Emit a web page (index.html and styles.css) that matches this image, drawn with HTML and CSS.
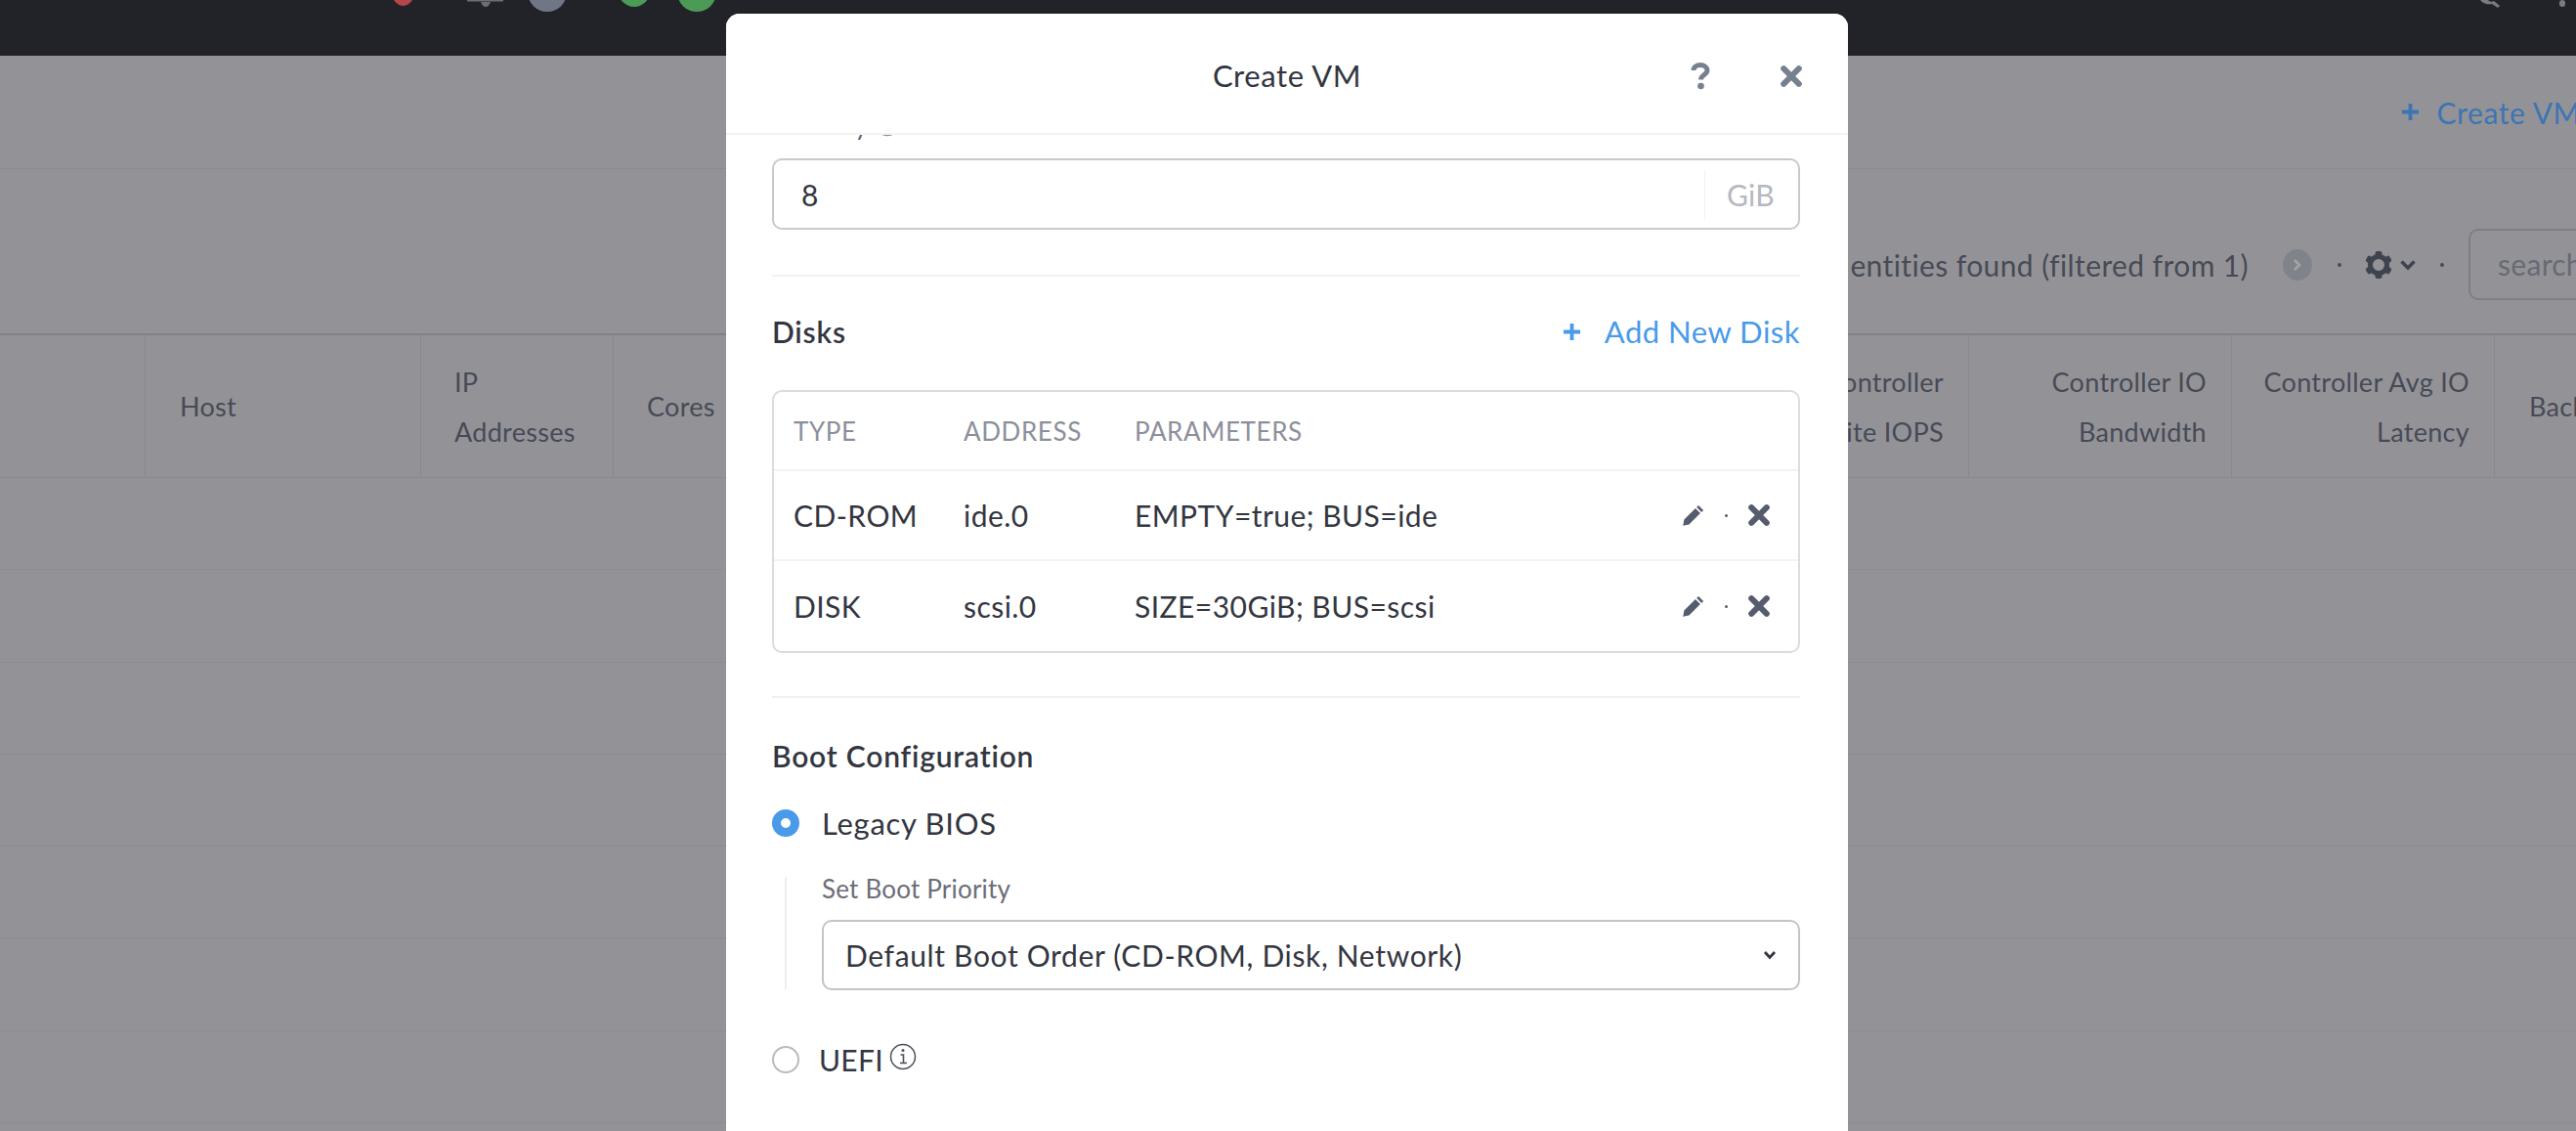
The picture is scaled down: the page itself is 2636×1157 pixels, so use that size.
FILE: index.html
```html
<!DOCTYPE html>
<html lang="en">
  <head>
    <meta charset="UTF-8" />
    <title>Create VM</title>
    <link rel="stylesheet" href="styles.css">
  </head>
  <body>
    <svg class="defs" width="0" height="0">
      <symbol id="icon-x" viewBox="0 0 20 20">
        <path d="M3.5 3.5 L16.5 16.5 M16.5 3.5 L3.5 16.5" fill="none" stroke="currentColor" stroke-width="5" stroke-linecap="round" />
      </symbol>
      <symbol id="icon-pencil" viewBox="0 0 20 20">
        <path d="M14.2 1.6 L18.4 5.8 L16.8 7.4 L12.6 3.2 Z M11.6 4.2 L15.8 8.4 L6.2 18 L1 19 L2 13.8 Z" fill="currentColor" />
      </symbol>
      <symbol id="icon-plus" viewBox="0 0 20 20">
        <path d="M10 1 V19 M1 10 H19" fill="none" stroke="currentColor" stroke-width="4" />
      </symbol>
    </svg>

    <div class="topbar">
      <svg class="topbar-icons" width="340" height="14" viewBox="0 0 340 14">
        <path d="M0 0 H19 C17 3 13 6 9.500 6 C6 6 2 3 0 0 Z" fill="#b5474a" />
        <path d="M75 0 H112 V1.500 H75 Z" fill="#6d6e74" />
        <path d="M89 2 H99 C98 5 96 7 94 7 C92 7 90 5 89 2 Z" fill="#6d6e74" />
        <circle cx="157" cy="-8" r="20" fill="#6f7685" />
        <circle cx="246" cy="-9" r="16" fill="#4b9a56" />
        <circle cx="310" cy="-8" r="20" fill="#4b9a56" />
      </svg>
      <svg class="topbar-tools" width="90" height="8" viewBox="0 0 90 8">
        <path d="M0 0 L8 0 C10 2 12 2 14 1 L20 6 L18 8 L12 4 C8 5 3 4 0 0 Z" fill="#7a7b80" />
        <rect x="81" y="0" width="6" height="7" rx="3" fill="#7a7b80" />
      </svg>
    </div>

    <div class="page">
      <div class="title-row">
        <span class="create-link">
          <svg class="create-plus" width="19" height="19"><use href="#icon-plus" /></svg>
          Create VM
        </span>
      </div>

      <div class="toolbar">
        <span class="found">0 entities found (filtered from 1)</span>
        <span class="next-btn">
          <svg width="10" height="14" viewBox="0 0 10 14"><path d="M2 2 L7 7 L2 12" fill="none" stroke="#a3a5a9" stroke-width="2.500" /></svg>
        </span>
        <span class="dot dot-one"></span>
        <svg class="gear" width="28" height="30" viewBox="0 0 28 30">
          <g fill="#3f4350">
            <rect x="10.500" y="1" width="7" height="28" rx="2" />
            <rect x="10.500" y="1" width="7" height="28" rx="2" transform="rotate(60 14 15)" />
            <rect x="10.500" y="1" width="7" height="28" rx="2" transform="rotate(120 14 15)" />
          </g>
          <circle cx="14" cy="15" r="8.500" fill="#939397" stroke="#3f4350" stroke-width="5" />
        </svg>
        <svg class="gear-caret" width="18" height="12" viewBox="0 0 18 12"><path d="M2.500 2.500 L9 9 L15.500 2.500" fill="none" stroke="#3f4350" stroke-width="3.500" /></svg>
        <span class="dot dot-two"></span>
        <div class="search-box">search</div>
      </div>

      <div class="grid-head">
        <div class="cell col-name"></div>
        <div class="cell col-host">Host</div>
        <div class="cell col-ip">IP<br />Addresses</div>
        <div class="cell col-cores">Cores</div>
        <div class="cell col-hidden"></div>
        <div class="cell col-num col-write">Controller<br />Write IOPS</div>
        <div class="cell col-num col-metric">Controller IO<br />Bandwidth</div>
        <div class="cell col-num col-metric">Controller Avg IO<br />Latency</div>
        <div class="cell col-back">Backup</div>
      </div>

      <div class="grid-row"></div>
      <div class="grid-row"></div>
      <div class="grid-row"></div>
      <div class="grid-row"></div>
      <div class="grid-row"></div>
      <div class="grid-row"></div>
      <div class="grid-row"></div>
    </div>

    <div class="modal">
      <div class="modal-head">
        <span class="modal-title">Create VM</span>
        <svg class="help-icon" width="20" height="28" viewBox="0 0 20 28">
          <path d="M3 8 C3 4.500 6 2.500 10 2.500 C14 2.500 17 5 17 8 C17 12.500 10.500 12.500 10.500 17.500" fill="none" stroke="#76808f" stroke-width="5" />
          <circle cx="10.500" cy="24" r="3.300" fill="#76808f" />
        </svg>
        <svg class="close-icon" width="24" height="24"><use href="#icon-x" /></svg>
      </div>

      <div class="modal-body">
        <div class="memory-label">Memory
          <svg width="24" height="24" viewBox="0 0 24 24"><circle cx="12" cy="12" r="10.500" fill="none" stroke="#8a8d96" stroke-width="1.500" /></svg>
        </div>
        <div class="field">
          <span class="field-value">8</span>
          <span class="field-unit">GiB</span>
        </div>

        <div class="rule rule-memory"></div>

        <div class="section-head">
          <span class="section-title">Disks</span>
          <span class="add-link">
            <svg class="add-plus" width="19" height="19"><use href="#icon-plus" /></svg>
            Add New Disk
          </span>
        </div>

        <table class="disk-table">
          <thead>
            <tr>
              <th class="col-type">Type</th>
              <th class="col-address">Address</th>
              <th>Parameters</th>
              <th class="col-actions"></th>
            </tr>
          </thead>
          <tbody>
            <tr>
              <td>CD-ROM</td>
              <td>ide.0</td>
              <td>EMPTY=true; BUS=ide</td>
              <td>
                <div class="row-actions">
                  <svg width="24" height="24"><use href="#icon-pencil" /></svg>
                  <span class="action-dot"></span>
                  <svg width="24" height="24"><use href="#icon-x" /></svg>
                </div>
              </td>
            </tr>
            <tr>
              <td>DISK</td>
              <td>scsi.0</td>
              <td>SIZE=30GiB; BUS=scsi</td>
              <td>
                <div class="row-actions">
                  <svg width="24" height="24"><use href="#icon-pencil" /></svg>
                  <span class="action-dot"></span>
                  <svg width="24" height="24"><use href="#icon-x" /></svg>
                </div>
              </td>
            </tr>
          </tbody>
        </table>

        <div class="rule rule-disks"></div>

        <div class="boot-title">Boot Configuration</div>

        <div class="radio-row">
          <span class="radio radio-on"></span>
          <span class="radio-text">Legacy BIOS</span>
        </div>

        <div class="boot-sub">
          <div class="sub-label">Set Boot Priority</div>
          <div class="select-box">
            <span>Default Boot Order (CD-ROM, Disk, Network)</span>
            <svg width="14" height="10" viewBox="0 0 14 10"><path d="M2 2 L7 7.500 L12 2" fill="none" stroke="#33363f" stroke-width="2.800" /></svg>
          </div>
        </div>

        <div class="radio-row radio-uefi">
          <span class="radio"></span>
          <span class="radio-text">UEFI</span>
          <svg class="info-icon" width="28" height="30" viewBox="0 0 28 30">
            <circle cx="14" cy="15" r="12.500" fill="none" stroke="#4b4e59" stroke-width="1.500" />
            <path d="M11.500 13 H14.500 V21 M11 21.500 H18" fill="none" stroke="#4b4e59" stroke-width="1.600" />
            <circle cx="14" cy="8.500" r="1.500" fill="#4b4e59" />
          </svg>
        </div>
      </div>
    </div>
  </body>
</html>
```

FILE: styles.css
```css
html,
body {
  margin: 0;
  padding: 0;
  height: 100%;
  overflow: hidden;
}

body {
  font-family: "Lato", "Open Sans", sans-serif;
  font-size: 27px;
  letter-spacing: 0.3px;
  background-color: #939397;
  color: #33363f;
  position: relative;
}

.defs {
  display: block;
  height: 0;
}

/* top bar, its icons are cut off by the top of the window */
.topbar {
  height: 57px;
  background-color: #222329;
  display: flex;
  justify-content: space-between;
  align-items: flex-start;
  padding: 0 8px 0 403px;
  box-sizing: border-box;
}

.topbar-icons,
.topbar-tools {
  display: block;
}

/* dimmed page behind the modal */
.page {
  color: #474a56;
}

.title-row {
  height: 115px;
  display: flex;
  align-items: center;
  justify-content: flex-end;
  border-bottom: 1px solid #8a8a8f;
}

.create-link {
  color: #3d74b4;
  font-size: 30px;
  letter-spacing: 0.6px;
  white-space: nowrap;
  margin-right: -5px;
  display: flex;
  align-items: center;
  gap: 18px;
}

.toolbar {
  height: 170px;
  display: flex;
  align-items: center;
  border-bottom: 2px solid #808186;
  padding: 27px 0 0 1800px;
  box-sizing: border-box;
}

.found {
  width: 501px;
  flex: none;
  text-align: right;
  white-space: nowrap;
  font-size: 30px;
  letter-spacing: 0.4px;
}

.next-btn {
  flex: none;
  width: 30px;
  height: 32px;
  margin-left: 35px;
  border-radius: 50%;
  background-color: #81838a;
  display: flex;
  align-items: center;
  justify-content: center;
}

.dot {
  flex: none;
  width: 4px;
  height: 4px;
  border-radius: 50%;
  background-color: #474a56;
}

.dot-one {
  margin-left: 26px;
}

.gear {
  flex: none;
  margin-left: 24px;
}

.gear-caret {
  flex: none;
  margin-left: 7px;
}

.dot-two {
  margin-left: 24px;
}

.search-box {
  flex: none;
  width: 300px;
  height: 73px;
  margin-left: 25px;
  padding-left: 28px;
  box-sizing: border-box;
  border: 2px solid #7e7f85;
  border-radius: 10px;
  color: #666a75;
  font-size: 30px;
  line-height: 69px;
}

.grid-head {
  height: 146px;
  display: flex;
  border-bottom: 1px solid #8a8a8f;
  line-height: 51px;
  box-sizing: border-box;
}

.cell {
  flex: none;
  height: 100%;
  box-sizing: border-box;
  border-right: 1px solid #88888d;
  padding: 0 34px;
  display: flex;
  flex-direction: column;
  justify-content: center;
  white-space: nowrap;
}

.col-name {
  width: 149px;
}

.col-host {
  width: 282px;
  padding-left: 35px;
}

.col-ip {
  width: 197px;
}

.cell.col-ip {
  display: block;
  padding-top: 22px;
}

.col-cores {
  width: 200px;
}

.col-hidden {
  width: 1000px;
}

.col-write {
  width: 187px;
}

.col-metric {
  width: 269px;
}

.col-num {
  display: block;
  text-align: right;
  padding: 22px 25px 0 0;
}

.col-back {
  border-right: none;
  padding-left: 35px;
}

.grid-row {
  height: 94.300px;
  border-bottom: 1px solid #8c8c91;
  box-sizing: border-box;
}

/* modal */
.modal {
  position: absolute;
  left: 743px;
  top: 14px;
  width: 1148px;
  bottom: -30px;
  background-color: #ffffff;
  border-radius: 14px;
  overflow: hidden;
}

.modal-head {
  height: 124px;
  position: relative;
  display: flex;
  align-items: center;
  justify-content: center;
  border-bottom: 2px solid #f3f3f4;
  box-sizing: border-box;
  padding-top: 3px;
  background-color: #ffffff;
  z-index: 1;
}

.modal-title {
  font-size: 31px;
  letter-spacing: 0.6px;
}

.help-icon {
  position: absolute;
  left: 987px;
  top: 50px;
}

.close-icon {
  position: absolute;
  left: 1078px;
  top: 52px;
  color: #76808f;
}

.modal-body {
  padding: 0 49px 0 47px;
}

.memory-label {
  height: 30px;
  margin-top: -25px;
  line-height: 30px;
  font-size: 26px;
  color: #5e6270;
  display: flex;
  align-items: center;
  gap: 8px;
}

.field {
  height: 73px;
  margin-top: 19px;
  box-sizing: border-box;
  border: 2px solid #c9c9cc;
  border-radius: 10px;
  display: flex;
  align-items: center;
  padding-left: 28px;
}

.field-value {
  flex: 1;
  font-size: 30px;
}

.field-unit {
  width: 96px;
  height: 50px;
  line-height: 50px;
  box-sizing: border-box;
  padding-left: 22px;
  border-left: 1px solid #f0f0f1;
  color: #b5b8c0;
  font-size: 30px;
}

.rule {
  height: 2px;
  background-color: #f1f1f2;
}

.rule-memory {
  margin-top: 46px;
}

.section-head {
  height: 40px;
  margin-top: 36px;
  display: flex;
  align-items: center;
  justify-content: space-between;
}

.section-title,
.boot-title {
  font-size: 30px;
  font-weight: 600;
  letter-spacing: 0.8px;
  color: #33363f;
}

.add-link {
  color: #4a9aea;
  font-size: 31px;
  letter-spacing: 0.5px;
  display: flex;
  align-items: center;
  gap: 24px;
}

.disk-table {
  width: 100%;
  margin-top: 40px;
  border-collapse: separate;
  border-spacing: 0;
  table-layout: fixed;
  border: 2px solid #dcdcde;
  border-radius: 10px;
  font-size: 30px;
  letter-spacing: 0.45px;
}

.disk-table th {
  height: 81px;
  padding: 0 0 0 20px;
  text-align: left;
  font-weight: 400;
  font-size: 26px;
  letter-spacing: 0.6px;
  color: #8c8f9b;
  text-transform: uppercase;
  border-bottom: 2px solid #f3f3f4;
  box-sizing: border-box;
}

.disk-table td {
  height: 92px;
  padding: 0 0 0 20px;
  box-sizing: border-box;
}

.disk-table tbody tr:first-child td {
  border-bottom: 2px solid #f3f3f4;
}

.disk-table th.col-type {
  width: 174px;
}

.disk-table th.col-address {
  width: 175px;
}

.disk-table th.col-actions {
  width: 160px;
}

.row-actions {
  display: flex;
  align-items: center;
  justify-content: flex-end;
  padding-right: 28px;
  color: #555c6e;
}

.action-dot {
  width: 3px;
  height: 3px;
  margin: 0 20px 0 20px;
  border-radius: 50%;
  background-color: #555c6e;
}

.rule-disks {
  margin-top: 44px;
}

.boot-title {
  height: 36px;
  line-height: 36px;
  margin-top: 41px;
}

.radio-row {
  height: 36px;
  margin-top: 33px;
  display: flex;
  align-items: center;
  gap: 23px;
  font-size: 31px;
  letter-spacing: 0.7px;
}

.radio {
  flex: none;
  width: 28px;
  height: 28px;
  box-sizing: border-box;
  border: 2px solid #b9bbc0;
  border-radius: 50%;
  background-color: #ffffff;
}

.radio-on {
  border: 9px solid #4a9aea;
}

.boot-sub {
  margin-top: 37px;
  margin-left: 13px;
  padding-left: 36px;
  border-left: 2px solid #efeff0;
  height: 115px;
}

.sub-label {
  height: 24px;
  line-height: 24px;
  font-size: 26px;
  letter-spacing: 0.2px;
  color: #6b6e78;
}

.select-box {
  height: 72px;
  margin-top: 20px;
  box-sizing: border-box;
  border: 2px solid #c4c4c7;
  border-radius: 10px;
  display: flex;
  align-items: center;
  justify-content: space-between;
  padding: 0 22px;
  font-size: 30px;
  letter-spacing: 0.65px;
}

.radio-uefi {
  margin-top: 54px;
  gap: 20px;
}

.radio-uefi .radio-text {
  font-size: 30px;
  letter-spacing: 0.3px;
}

.info-icon {
  margin-left: -14px;
  margin-top: -6px;
}
```
